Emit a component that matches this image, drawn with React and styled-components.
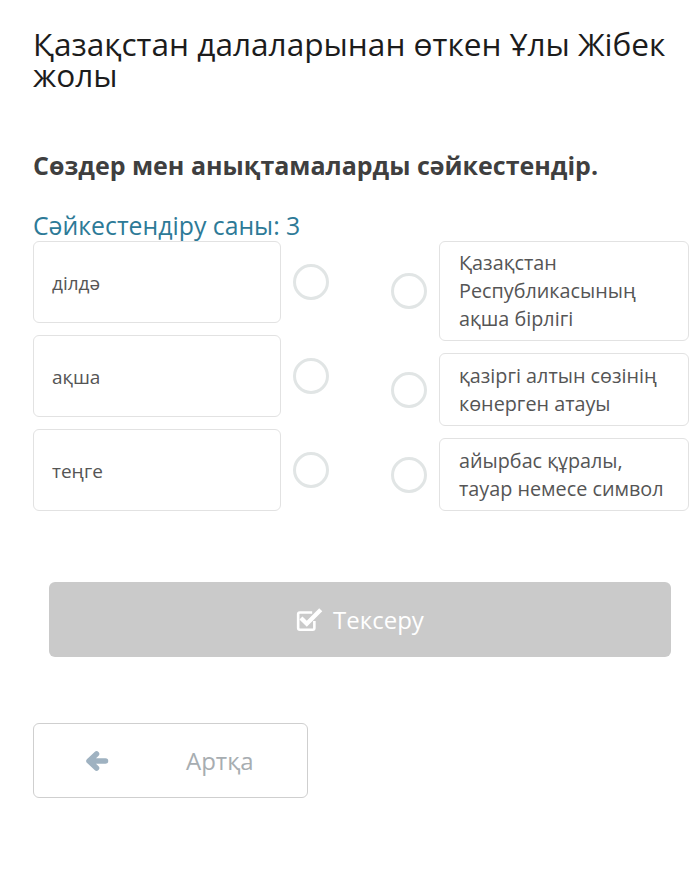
import React from 'react';
import styled, { createGlobalStyle } from 'styled-components';

const GlobalStyle = createGlobalStyle`
  body {
    margin: 0;
    background: #fff;
    font-family: "Open Sans", "Noto Sans", sans-serif;
  }
`;

const Page = styled.div`
  width: 698px;
  box-sizing: border-box;
  padding: 28px 9px 40px 33px;
`;

const Title = styled.h1`
  margin: 0;
  font-size: 31.6px;
  line-height: 31px;
  font-weight: 400;
  color: #1c1c1c;
`;

const Question = styled.h2`
  margin: 60px 0 0;
  font-size: 25px;
  line-height: 30px;
  font-weight: 700;
  color: #3f3f3f;
`;

const Count = styled.div`
  margin-top: 31px;
  font-size: 24.8px;
  line-height: 28px;
  color: #2d7a97;
`;

const Board = styled.div`
  margin-top: 2px;
  display: flex;
  justify-content: space-between;
`;

const Column = styled.div`
  display: flex;
  flex-direction: column;
  gap: 12px;
`;

const Row = styled.div`
  display: flex;
  align-items: center;
  gap: 12px;
`;

const Card = styled.div`
  box-sizing: border-box;
  width: ${p => p.$w}px;
  height: ${p => p.$h}px;
  padding: ${p => (p.$right ? '0 12px 0 19px' : '2px 16px 0 18px')};
  display: flex;
  align-items: center;
  border: 1px solid #e2e2e2;
  border-radius: 6px;
  font-size: ${p => (p.$right ? '19.8px' : '19px')};
  line-height: 28px;
  color: #555;
`;

const Dot = styled.span`
  box-sizing: border-box;
  width: 36px;
  height: 36px;
  border: 3px solid #e1e5e5;
  border-radius: 50%;
  flex: none;
`;

const CheckButton = styled.button`
  margin: 71px 18px 0 16px;
  width: calc(100% - 34px);
  height: 75px;
  border: none;
  border-radius: 6px;
  background: #cacaca;
  color: #fff;
  font-family: inherit;
  font-size: 24px;
  display: flex;
  align-items: center;
  justify-content: center;
  gap: 10px;
`;

const BackButton = styled.button`
  margin-top: 66px;
  width: 275px;
  height: 75px;
  box-sizing: border-box;
  border: 1px solid #cfcfcf;
  border-radius: 6px;
  background: #fff;
  font-family: inherit;
  font-size: 24px;
  color: #a7adb1;
  display: flex;
  align-items: center;
  padding: 0 0 0 51px;
  gap: 77px;
`;

const CheckIcon = () => (
  <svg width="27" height="26" viewBox="0 0 25 24">
    <path d="M17 13v6.5a1.5 1.5 0 0 1-1.5 1.5h-12A1.5 1.5 0 0 1 2 19.5v-13A1.5 1.5 0 0 1 3.5 5H15" fill="none" stroke="#fff" strokeWidth="2.4" />
    <path d="M6 11.5l4 4L21.5 4" fill="none" stroke="#fff" strokeWidth="4" strokeLinecap="square" />
  </svg>
);

const ArrowIcon = () => (
  <svg width="24" height="22" viewBox="0 0 24 22">
    <path d="M20.5 11H5M11.5 4L4 11l7.5 7" fill="none" stroke="#9fb2c1" strokeWidth="5.5" strokeLinecap="round" strokeLinejoin="round" />
  </svg>
);

const left = ['ділдә', 'ақша', 'теңге'];
const right = [
  { text: 'Қазақстан Республикасының ақша бірлігі', h: 100 },
  { text: 'қазіргі алтын сөзінің көнерген атауы', h: 73 },
  { text: 'айырбас құралы, тауар немесе символ', h: 73 },
];

export default function App() {
  return (
    <>
      <GlobalStyle />
      <Page>
        <Title>Қазақстан далаларынан өткен Ұлы Жібек жолы</Title>
        <Question>Сөздер мен анықтамаларды сәйкестендір.</Question>
        <Count>Сәйкестендіру саны: 3</Count>
        <Board>
          <Column>
            {left.map(t => (
              <Row key={t}>
                <Card $w={248} $h={82}>{t}</Card>
                <Dot />
              </Row>
            ))}
          </Column>
          <Column>
            {right.map(r => (
              <Row key={r.text}>
                <Dot />
                <Card $right $w={250} $h={r.h}>{r.text}</Card>
              </Row>
            ))}
          </Column>
        </Board>
        <CheckButton>
          <CheckIcon />
          Тексеру
        </CheckButton>
        <BackButton>
          <ArrowIcon />
          Артқа
        </BackButton>
      </Page>
    </>
  );
}
